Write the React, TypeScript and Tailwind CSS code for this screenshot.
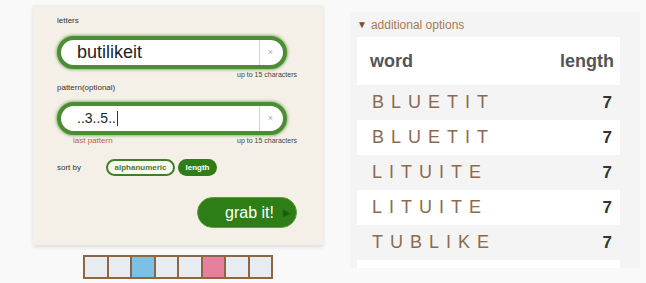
import React from "react";

const rows = ["BLUETIT", "BLUETIT", "LITUITE", "LITUITE", "TUBLIKE"];
const boxes = ["#e8ecf1", "#e8ecf1", "#7cc0e6", "#e8ecf1", "#e8ecf1", "#e6809c", "#e8ecf1", "#e8ecf1"];

function Field({ value, big }: { value: string; big?: boolean }) {
  return (
    <div className="w-[230px] h-[33px] rounded-full border-[4px] border-[#4b8d33] bg-white shadow-[0_0_3px_1px_rgba(75,141,51,0.6)] flex items-stretch overflow-hidden">
      <div className={"flex-1 flex items-center pl-[16px] text-[#1e1e1e] " + (big ? "text-[18px] font-medium" : "text-[14px] font-medium")}>
        {value}
        {!big && <span className="ml-[1px] w-[1px] h-[15px] bg-[#333]" />}
      </div>
      <div className="w-[24px] border-l border-[#d6d6d6] flex items-center justify-center text-[9px] text-[#aaa] pr-[2px]">×</div>
    </div>
  );
}

export default function App() {
  return (
    <div className="w-[646px] h-[283px] bg-[#f9f9f9] flex overflow-hidden" style={{ fontFamily: '"Liberation Sans", Arial, sans-serif' }}>
      <div className="ml-[33px] mt-[5px] w-[290px] flex flex-col">
        <div className="h-[240px] bg-[#f5f0e7] shadow-[0_2px_4px_rgba(0,0,0,0.12)] pl-[24px] pr-[26px] pt-[11px] flex flex-col">
          <div className="text-[8px] leading-[10px] text-[#333]">letters</div>
          <div className="mt-[10px]"><Field value="butilikeit" big /></div>
          <div className="mt-[1px] text-[7px] leading-[10px] text-[#444] text-right">up to 15 characters</div>
          <div className="mt-[3px] text-[8px] leading-[10px] text-[#333]">pattern(optional)</div>
          <div className="mt-[9px]"><Field value="..3..5.." /></div>
          <div className="mt-[1px] flex justify-between text-[7px] leading-[10px]">
            <span className="pl-[16px] text-[8px] text-[#b4654a]">last pattern</span>
            <span className="text-[#444]">up to 15 characters</span>
          </div>
          <div className="mt-[13px] flex items-center h-[17px]">
            <span className="text-[8px] text-[#333] w-[49px]">sort by</span>
            <span className="h-[17px] w-[69px] rounded-full border-2 border-[#3e7f2a] bg-[#faf7f0] text-[#3e7f2a] text-[8px] font-bold flex items-center justify-center">alphanumeric</span>
            <span className="ml-[3px] h-[17px] w-[39px] rounded-full bg-[#2f7d18] text-white text-[8px] font-bold flex items-center justify-center">length</span>
          </div>
          <div className="mt-[21px] flex justify-end">
            <div className="w-[100px] h-[31px] rounded-full bg-[#2e7d16] border border-[#5d9c3f] flex items-center pl-[27px] text-white text-[16px] font-medium whitespace-nowrap">
              <span>grab it!</span>
              <span className="ml-[9px] text-[10px] text-[#1d5a0e]">▶</span>
            </div>
          </div>
        </div>
        <div className="mt-[10px] ml-[50px] flex w-fit bg-[#8c6645] gap-[2px] p-[2px]">
          {boxes.map((c, i) => (
            <div key={i} className="w-[21.5px] h-[20px]" style={{ backgroundColor: c }} />
          ))}
        </div>
      </div>

      <div className="ml-[27px] mt-[12px] w-[290px] h-[256px] bg-[#f4f4f4] pl-[7px] pr-[20px] flex flex-col">
        <div className="h-[25px] shrink-0 flex items-center text-[12px] text-[#a87a50]">
          <span className="text-[10px] text-[#7a4e2a] mr-[4px]">▼</span>additional options
        </div>
        <div className="h-[48px] shrink-0 bg-white flex items-center justify-between pl-[13px] pr-[6px] text-[18px] font-bold text-[#555]">
          <span>word</span>
          <span>length</span>
        </div>
        {rows.map((w, i) => (
          <div key={i} className={"h-[35px] shrink-0 flex items-center justify-between pl-[15px] pr-[8px] " + (i % 2 === 1 ? "bg-white" : "")}>
            <span className="text-[18px] tracking-[7px] text-[#8c6a4f]">{w}</span>
            <span className="text-[17px] font-bold text-[#333]">7</span>
          </div>
        ))}
        <div className="h-[8px] shrink-0 bg-white" />
      </div>
    </div>
  );
}
